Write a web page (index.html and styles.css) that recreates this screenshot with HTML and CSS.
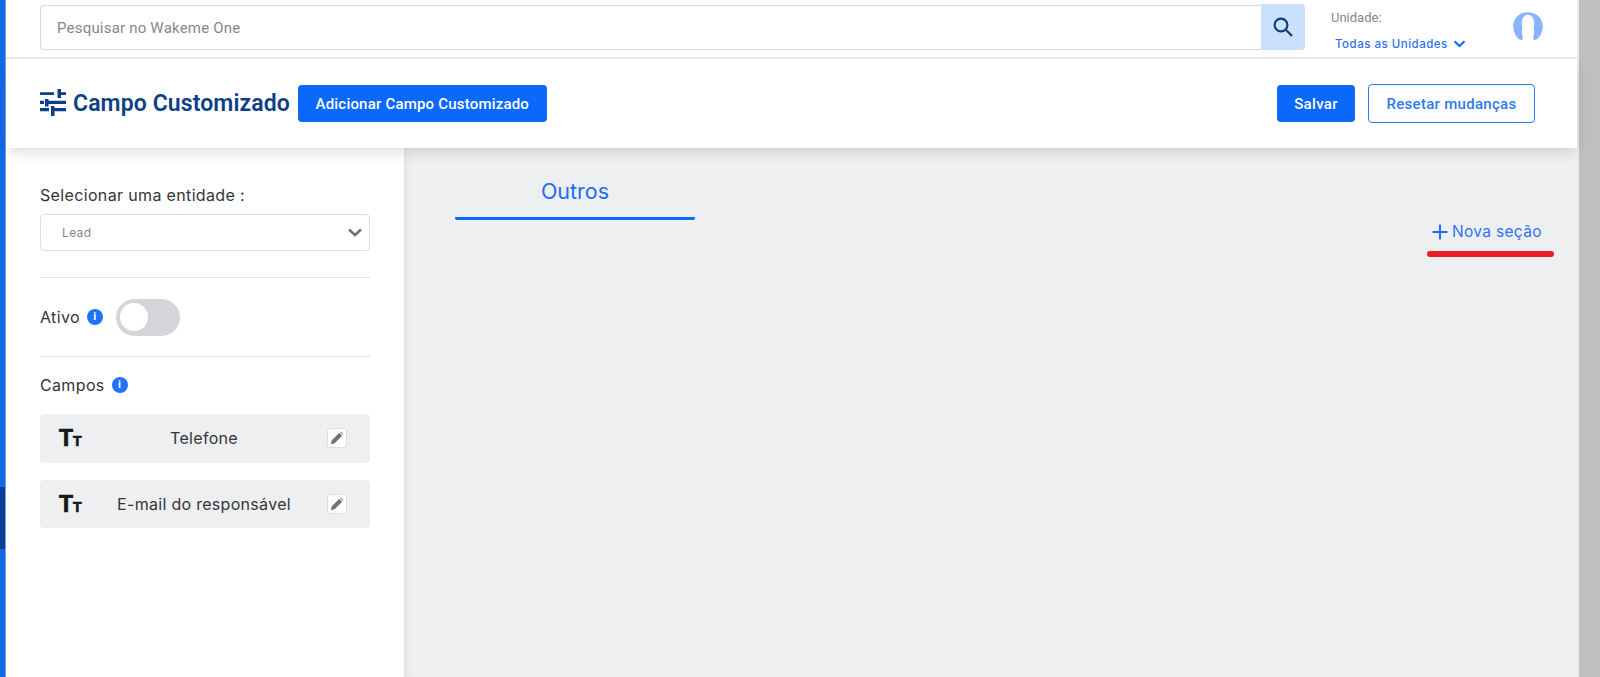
FILE: index.html
```html
<!DOCTYPE html>
<html lang="pt">
<head>
<meta charset="utf-8">
<title>Campo Customizado</title>
<link rel="stylesheet" href="styles.css">
</head>
<body>
<div class="shell">
  <div class="strip">
    <div class="strip-top"></div>
    <div class="strip-active"></div>
    <div class="strip-rest"></div>
  </div>
  <div class="page">
    <header class="topbar">
      <div class="search">
        <div class="search-input">Pesquisar no Wakeme One</div>
        <div class="search-btn">
          <svg width="24" height="24" viewBox="0 0 24 24" fill="none" stroke="#0f3f80" stroke-width="2.2"><circle cx="10" cy="10" r="6.4"/><path d="M14.800 14.800 L21 21"/></svg>
        </div>
      </div>
      <div class="unit">
        <div class="unit-label">Unidade:</div>
        <div class="unit-value">Todas as Unidades
          <svg width="13" height="8" viewBox="0 0 12 8" fill="none" stroke="#0a69fa" stroke-width="2"><path d="M1 1.200 L6 6 L11 1.200"/></svg>
        </div>
      </div>
      <svg class="avatar" width="30" height="30" viewBox="0 0 30 30"><path fill="#8ab4fb" d="M15 1.200 C24 1.200 29.800 8 29.800 15 C29.800 22 25.500 28.500 22 29 C20.500 29.200 20 27.500 20.500 25.500 C21 23 21.500 21 20.500 18 C22 12 21 3.800 15 3.800 C9 3.800 8 12 9.500 18 C8.500 21 9 23 9.500 25.500 C10 27.500 9.500 29.200 8 29 C4.500 28.500 .2 22 .2 15 C.2 8 6 1.200 15 1.200 Z"/></svg>
    </header>
    <section class="pagehead">
      <svg class="head-icon" width="26" height="27" viewBox="0 0 26 27" fill="#0d3f88"><path d="M0 3.300h14V6H0z M17.500 0H21v3.300h5V6h-5v3h-3.500z M0 11.700h4V15H0z M5 10h3.500v1.700H26V15H8.500v2.500H5z M0 19h9v3.300H0z M11 17h3.500v2H26v3.300H14.500V27H11z"/></svg>
      <h1 class="title">Campo Customizado</h1>
      <button class="btn btn-primary btn-add">Adicionar Campo Customizado</button>
      <div class="head-actions">
        <button class="btn btn-primary btn-save">Salvar</button>
        <button class="btn btn-outline">Resetar mudanças</button>
      </div>
    </section>
    <div class="body">
      <aside class="sidebar">
        <label class="entity-label">Selecionar uma entidade :</label>
        <div class="select">
          <span>Lead</span>
          <svg width="14" height="9" viewBox="0 0 14 9" fill="none" stroke="#6b6f75" stroke-width="2.400"><path d="M1 1.500 L7 7 L13 1.500"/></svg>
        </div>
        <hr class="rule rule-first">
        <div class="active-row">
          <span>Ativo</span>
          <span class="info">i</span>
          <span class="toggle"><span class="knob"></span></span>
        </div>
        <hr class="rule">
        <div class="fields-title"><span>Campos</span><span class="info">i</span></div>
        <div class="field field-a">
          <span class="tt">T<small>T</small></span>
          <span class="field-name">Telefone</span>
          <span class="edit"><svg width="14" height="14" viewBox="0 0 14 14"><path fill="#6f7378" d="M.8 13.200 L1.800 9.300 L9.300 1.800 L12.200 4.700 L4.700 12.200 Z M10.200 1 L11 .5 L13.500 3 L13 3.800 Z"/></svg></span>
        </div>
        <div class="field">
          <span class="tt">T<small>T</small></span>
          <span class="field-name">E-mail do responsável</span>
          <span class="edit"><svg width="14" height="14" viewBox="0 0 14 14"><path fill="#6f7378" d="M.8 13.200 L1.800 9.300 L9.300 1.800 L12.200 4.700 L4.700 12.200 Z M10.200 1 L11 .5 L13.500 3 L13 3.800 Z"/></svg></span>
        </div>
      </aside>
      <main class="main">
        <div class="tab">Outros</div>
        <div class="new-section">
          <svg width="16" height="16" viewBox="0 0 16 16" fill="none" stroke="#1f6bf5" stroke-width="2"><path d="M8 0.500 V15.500 M0.500 8 H15.500"/></svg>
          <span>Nova seção</span>
          <span class="annotation"></span>
        </div>
      </main>
    </div>
  </div>
  <div class="scrollbar"></div>
</div>
</body>
</html>
```
FILE: styles.css
```css
* { box-sizing: border-box; }
html, body { margin: 0; height: 100%; }
body { font-family: "Inter", "Liberation Sans", sans-serif; color: #2b2d31; overflow: hidden; background: #fff; }
.shell { display: flex; height: 677px; }
.strip { width: 6px; flex: none; display: flex; flex-direction: column; border-right: 1px solid #6ea4f2; }
.strip-top { height: 487px; background: #1468e6; }
.strip-active { height: 62px; background: #083f94; }
.strip-rest { flex: 1; background: #1468e6; }
.page { width: 1571px; flex: none; display: flex; flex-direction: column; }
.scrollbar { flex: 1; border-left: 2px solid #ececec; background: #bfbfbf; }

.topbar { height: 59px; flex: none; display: flex; align-items: flex-start; padding: 5px 0 0 34px; border-bottom: 2px solid #e9eaec; }
.search { display: flex; width: 1265px; height: 45px; }
.search-input { flex: 1; border: 1px solid #d9dbde; border-right: 0; border-radius: 4px 0 0 4px; padding: 0 0 0 16px; font: 15px/45px "Roboto", sans-serif; letter-spacing: .2px; color: #85888c; }
.search-btn { width: 44px; height: 46px; margin-top: -1px; background: #cbe0fd; border-radius: 0 4px 4px 0; display: flex; align-items: center; justify-content: center; }
.unit { margin-left: 26px; width: 182px; font-family: "Roboto", sans-serif; }
.unit-label { font-size: 13px; color: #85888c; margin-top: 5px; line-height: 15px; }
.unit-value { font-family: "Inter", sans-serif; font-size: 11.500px; font-weight: 500; letter-spacing: .5px; color: #2f6ff2; margin: 11px 0 0 4px; line-height: 16px; display: flex; align-items: center; gap: 5px; white-space: nowrap; }
.avatar { margin-top: 6px; }

.pagehead { height: 89px; flex: none; display: flex; align-items: center; padding: 0 42px 0 34px; background: #fff; box-shadow: 0 6px 12px -2px rgba(40,44,52,.16); position: relative; z-index: 2; }
.head-icon { margin-top: -2px; }
.title { font: 600 23px "Roboto", sans-serif; color: #0d3f88; margin: 0 0 0 7px; letter-spacing: .1px; }
.btn { font: 500 15px "Roboto", sans-serif; height: 37px; border-radius: 4px; border: 0; padding: 0; }
.btn-primary { background: #0a69fa; color: #fff; }
.btn-add { width: 249px; margin-left: 8px; letter-spacing: .2px; }
.head-actions { margin-left: auto; display: flex; align-items: center; gap: 13px; }
.btn-save { width: 78px; letter-spacing: .3px; }
.btn-outline { width: 167px; height: 39px; background: #fff; color: #2f78f5; border: 1px solid #2f78f5; letter-spacing: .3px; }

.body { flex: 1; display: flex; min-height: 0; }
.sidebar { width: 398px; flex: none; padding: 37px 34px 0 34px; background: #fff; letter-spacing: .35px; }
.entity-label { display: block; font-size: 16px; line-height: 20px; color: #33363a; }
.select { margin: 9px 0 0 0; height: 37px; border: 1px solid #dcdee1; border-radius: 4px; display: flex; align-items: center; justify-content: space-between; padding: 0 7px 0 21px; font-size: 12px; color: #85888c; }
.rule { border: 0; height: 1px; background: #e1e3e5; margin: 0; }
.rule-first { margin-top: 26px; }
.active-row { display: flex; align-items: center; height: 78px; font-size: 16px; color: #33363a; }
.info { width: 16px; height: 16px; border-radius: 50%; background: #1f73ff; color: #fff; font: 700 11px/16px "Roboto", sans-serif; text-align: center; margin-left: 7px; }
.toggle { width: 64px; height: 37px; margin-left: 13px; border-radius: 19px; background: #d3d5d9; padding: 4px; }
.knob { display: block; width: 28px; height: 28px; border-radius: 50%; background: #fff; }
.fields-title { display: flex; align-items: center; margin-top: 18px; height: 20px; font-size: 16px; color: #33363a; }
.field { margin: 17px 0 0 0; height: 48px; border-radius: 4px; background: #eeeff1; display: flex; align-items: center; padding: 0 23px 0 19px; font-size: 16px; letter-spacing: .3px; color: #33363a; }
.field-a { margin-top: 19px; height: 49px; padding-bottom: 1px; }
.tt { width: 24px; font: 700 23px/24px "Liberation Sans", sans-serif; -webkit-text-stroke: .7px #17181a; color: #17181a; letter-spacing: 0; padding-top: 2px; }
.tt small { font-size: 14px; }
.field-name { flex: 1; text-align: center; padding-right: 2px; }
.edit { width: 20px; height: 20px; border: 1px solid #dcdee1; border-radius: 3px; background: #fff; display: flex; align-items: center; justify-content: center; }

.main { flex: 1; background: #eeeff1; position: relative; padding: 0 0 0 51px; box-shadow: inset 6px 0 8px -6px rgba(40,44,52,.12); }
.tab { width: 240px; margin-top: 27px; height: 45px; border-bottom: 3px solid #0a69fa; text-align: center; font-size: 21.500px; line-height: 32px; color: #1f6bf5; border-radius: 0 0 2px 2px; }
.new-section { position: absolute; left: 1028px; top: 74px; display: flex; align-items: center; gap: 4px; font-size: 15.500px; letter-spacing: .32px; line-height: 20px; color: #2f74f5; }
.annotation { position: absolute; left: -5px; top: 29px; width: 127px; height: 6px; border-radius: 3px; background: #ec1c24; }
```
